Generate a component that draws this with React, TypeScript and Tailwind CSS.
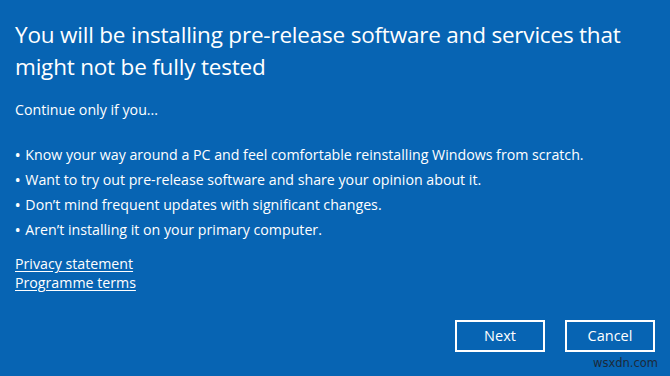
import React from 'react';

const bullets = [
  'Know your way around a PC and feel comfortable reinstalling Windows from scratch.',
  'Want to try out pre-release software and share your opinion about it.',
  'Don\u2019t mind frequent updates with significant changes.',
  'Aren\u2019t installing it on your primary computer.',
];

export default function App() {
  return (
    <div
      className="relative w-[670px] h-[376px] overflow-hidden bg-[#0764b3] text-white flex flex-col px-[15px] pt-[19px]"
      style={{ fontFamily: '"Open Sans", "Noto Sans", sans-serif' }}
    >
      <h1 className="text-[22.5px] leading-[32px] font-normal tracking-[-0.2px]">
        You will be installing pre-release software and services that might not be fully tested
      </h1>

      <p className="mt-[17px] text-[14.2px] leading-[20px]">Continue only if you...</p>

      <ul className="mt-[22px] flex flex-col text-[14.2px] leading-[25px]">
        {bullets.map((b) => (
          <li key={b} className="flex gap-[5px]">
            <span className="font-semibold">•</span>
            <span>{b}</span>
          </li>
        ))}
      </ul>

      <div className="mt-[12px] flex flex-col items-start text-[14.2px] leading-[19px]">
        <a className="underline underline-offset-2">Privacy statement</a>
        <a className="underline underline-offset-2">Programme terms</a>
      </div>

      <div className="mt-auto mb-[24px] flex justify-end gap-[20px]">
        <button className="w-[90px] h-[32px] border-2 border-white text-[14.5px]">Next</button>
        <button className="w-[90px] h-[32px] border-2 border-white text-[14.5px]">Cancel</button>
      </div>

      <span
        className="absolute right-[12px] bottom-[4px] text-[11.5px] text-[#1c2a3a]"
        style={{ fontFamily: '"DejaVu Sans", sans-serif' }}
      >
        wsxdn.com
      </span>
    </div>
  );
}
